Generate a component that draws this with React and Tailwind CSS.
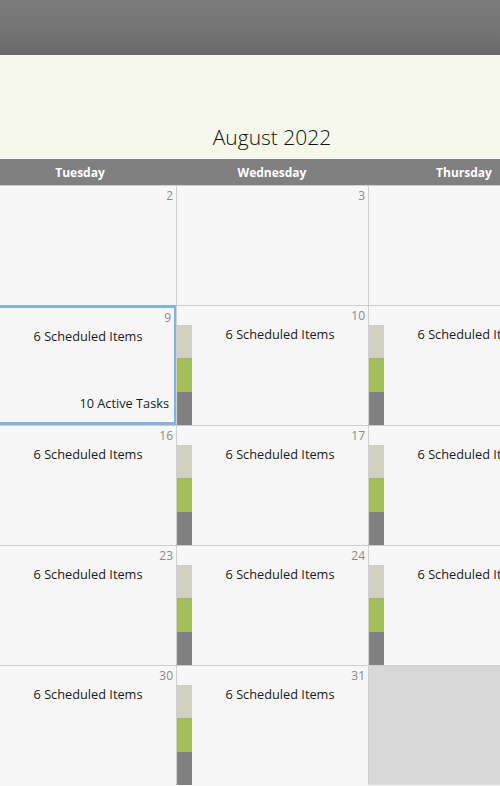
import React from 'react';

const DAYS = ['Sunday', 'Monday', 'Tuesday', 'Wednesday', 'Thursday', 'Friday', 'Saturday'];

// August 2022, weeks starting Sunday
function buildWeeks() {
    const weeks = [];
    let day = 0; // Aug 1 is a Monday, so Sunday slot is Jul 31
    for (let w = 0; w < 5; w++) {
        const row = [];
        for (let d = 0; d < 7; d++) {
            const inMonth = day >= 1 && day <= 31;
            row.push({ day, inMonth, items: inMonth && w > 0 });
            day++;
        }
        weeks.push(row);
    }
    return weeks;
}

function StatusBar() {
    return (
        <div className="w-[15px] flex flex-col shrink-0">
            <div className="h-[33px] bg-[#d0d1bf]" />
            <div className="h-[34px] bg-[#a4be56]" />
            <div className="flex-1 bg-[#808080]" />
        </div>
    );
}

function DayCell({ cell, selected }) {
    if (!cell.inMonth) {
        return <div className="h-[120px] border-l border-t border-[#cfcfcf] bg-[#d8d8d8]" />;
    }

    return (
        <div className="relative h-[120px] flex flex-col border-l border-t border-[#cfcfcf] bg-[#f7f7f7]">
            <div className={`h-[19px] leading-[20px] text-right text-[12px] text-[#8a8a8a] ${selected ? 'pt-[2px] pr-[5px]' : 'pr-[3px]'}`}>
                {cell.day}
            </div>
            {cell.items && (
                <div className="flex flex-1">
                    <StatusBar />
                    <div className="flex-1 flex flex-col">
                        <div className={`text-center text-[12.75px] leading-[18px] text-[#1a1a1a] ${selected ? 'pt-[2px]' : ''}`}>
                            6 Scheduled Items
                        </div>
                        {selected && (
                            <div className="mt-auto mb-[13px] pr-[7px] text-right text-[12.75px] leading-[18px] text-[#1a1a1a]">
                                10 Active Tasks
                            </div>
                        )}
                    </div>
                </div>
            )}
            {/* Selection outline */}
            {selected && (
                <div className="pointer-events-none absolute left-[-1px] top-[-1px] right-[-1px] bottom-0 border-[3px] border-[#7db6e5]" />
            )}
        </div>
    );
}

export default function App() {
    const weeks = buildWeeks();

    return (
        <div className="w-[500px] h-[786px] overflow-hidden bg-[#f7f7f7] font-['Open_Sans',sans-serif]">
            {/* Top bar */}
            <div className="h-[55px] bg-gradient-to-b from-[#7a7a7a] via-[#767676] to-[#686868]" />

            {/* Calendar, scrolled horizontally */}
            <div className="w-[1344px] -ml-[400px]">
                <div className="h-[104px] bg-[#f5f8ea] flex items-end justify-center pb-[7px]">
                    <span className="text-[21px] font-light text-[#111] leading-[30px]">August 2022</span>
                </div>

                <div className="grid grid-cols-7 h-[26px] bg-[#808080]">
                    {DAYS.map((d) => (
                        <div key={d} className="flex items-center justify-center pt-[1px] text-[12px] font-bold text-white">
                            {d}
                        </div>
                    ))}
                </div>

                {weeks.map((row, i) => (
                    <div key={i} className="grid grid-cols-7">
                        {row.map((cell, j) => (
                            <DayCell key={j} cell={cell} selected={cell.inMonth && cell.day === 9} />
                        ))}
                    </div>
                ))}
            </div>
        </div>
    );
}
